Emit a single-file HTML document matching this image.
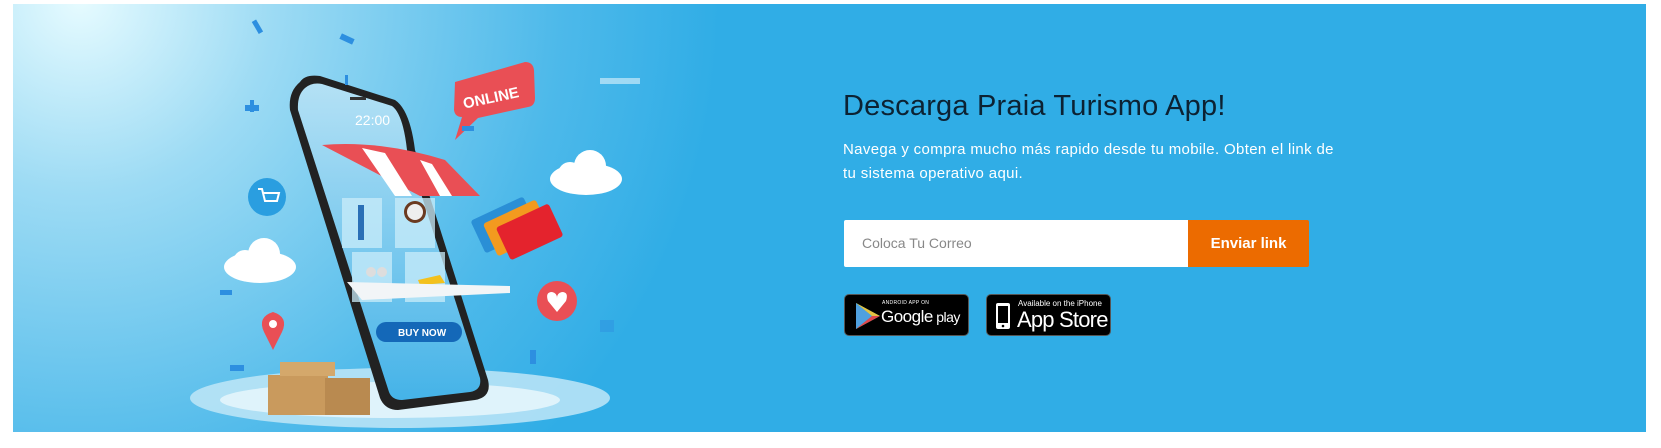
<!DOCTYPE html>
<html><head><meta charset="utf-8"><style>
html,body{margin:0;padding:0;background:#fff;width:1661px;height:448px;overflow:hidden;font-family:"Liberation Sans",sans-serif}
.banner{position:absolute;left:13px;top:4px;width:1633px;height:428px;background:#30ade6;overflow:hidden}
.art{position:absolute;left:-13px;top:-4px}
h2{position:absolute;left:830px;top:86px;margin:0;font-weight:400;font-size:29px;color:#0c2233;letter-spacing:0.2px}
p{position:absolute;left:830px;top:134px;margin:0;width:500px;font-size:15px;line-height:24px;color:#fff;letter-spacing:0.35px}
.inp{position:absolute;left:831px;top:216px;width:345px;height:47px;background:#fff;border-radius:2px 0 0 2px;color:#888;font-size:14px;line-height:47px;padding-left:18px;box-sizing:border-box}
.btn{position:absolute;left:1175px;top:216px;width:121px;height:47px;background:#ec6b00;color:#fff;font-weight:700;font-size:15px;line-height:47px;text-align:center;border-radius:0 2px 2px 0}
.bd{position:absolute;top:290px;height:42px;background:#000;border-radius:5px;color:#fff;border:1px solid #555;box-sizing:border-box}
</style></head><body>
<div class="banner">
<svg class="art" width="820" height="448" viewBox="0 0 820 448">
<defs>
<radialGradient id="g1" cx="80" cy="0" r="640" gradientUnits="userSpaceOnUse"><stop offset="0" stop-color="#e6fbff"/><stop offset="0.3" stop-color="#9ddbf4"/><stop offset="0.75" stop-color="#4db9ea"/><stop offset="1" stop-color="#30ade6"/></radialGradient>
<linearGradient id="sc" x1="0" y1="0" x2="0" y2="1"><stop offset="0" stop-color="#b4e1f5"/><stop offset="1" stop-color="#45b3e8"/></linearGradient>
</defs>
<rect width="820" height="448" fill="url(#g1)"/>
<ellipse cx="400" cy="398" rx="210" ry="30" fill="#bfe6f7" opacity="0.85"/>
<ellipse cx="390" cy="400" rx="170" ry="18" fill="#dff3fb"/>
<path d="M300 82 Q305 74 320 76 L395 100 Q410 110 415 150 L488 380 Q492 397 475 400 L398 410 Q385 410 380 398 L290 110 Q288 92 300 82Z" fill="#222"/>
<path d="M305 88 Q312 82 322 84 L392 106 Q403 114 407 150 L480 378 Q482 390 470 392 L402 400 Q392 400 389 392 L298 110 Q297 95 305 88Z" fill="url(#sc)"/>
<rect x="350" y="97" width="16" height="3" fill="#333"/>
<text x="355" y="125" font-size="14" fill="#fff" font-family="Liberation Sans">22:00</text>
<path d="M322 145 Q380 140 445 160 L480 196 L420 196 Z" fill="#e94f55"/>
<path d="M362 148 L395 196 L412 196 L385 153Z M420 160 L440 196 L452 196 L432 164Z" fill="#fff"/>
<rect x="342" y="198" width="40" height="50" fill="#c9ecfa" opacity="0.75"/>
<rect x="395" y="198" width="40" height="50" fill="#c9ecfa" opacity="0.75"/>
<rect x="352" y="252" width="40" height="50" fill="#c9ecfa" opacity="0.75"/>
<rect x="405" y="252" width="40" height="50" fill="#c9ecfa" opacity="0.75"/>
<rect x="358" y="205" width="6" height="35" fill="#2a6fb6"/>
<circle cx="415" cy="212" r="11" fill="#6b3a20"/><circle cx="415" cy="212" r="8" fill="#eee"/>
<circle cx="371" cy="272" r="5" fill="#ddd"/><circle cx="382" cy="272" r="5" fill="#ddd"/>
<path d="M418 280 L440 275 L445 283 L420 285Z" fill="#f3c11d"/>
<path d="M347 282 L510 286 L510 293 L362 300Z" fill="#f2f5f7"/>
<rect x="376" y="322" width="86" height="20" rx="10" fill="#1468b8"/>
<text x="398" y="336" font-size="10" fill="#fff" font-weight="700" font-family="Liberation Sans">BUY NOW</text>
<path d="M455 82 L525 62 Q533 62 534 70 L535 98 Q535 106 528 107 L478 118 L455 140 L462 117 Q455 117 454 110Z" fill="#e94f55"/>
<text x="462" y="103" font-size="15" fill="#fff" font-weight="700" transform="rotate(-12 490 95)" font-family="Liberation Sans">ONLINE</text>
<g transform="rotate(-25 510 230)"><rect x="478" y="205" width="58" height="36" rx="3" fill="#2a8fd6"/><rect x="488" y="213" width="58" height="36" rx="3" fill="#f39a1f"/><rect x="498" y="222" width="58" height="36" rx="3" fill="#e4232d"/></g>
<circle cx="267" cy="197" r="19" fill="#2a9ee0"/>
<path d="M258 189 L262 189 L265 201 L277 201 L279 193 L263 193" stroke="#fff" stroke-width="2" fill="none"/>
<circle cx="557" cy="301" r="20" fill="#e94f55"/><path d="M557 312 L548 301 Q545 292 552 292 Q557 293 557 298 Q557 293 562 292 Q569 292 566 301Z" fill="#fff"/>
<path d="M264 332 Q257 317 273 312 Q289 317 282 332 L273 350Z" fill="#e94f55"/><circle cx="273" cy="324" r="4" fill="#fff"/>
<ellipse cx="586" cy="179" rx="36" ry="16" fill="#fff"/><circle cx="590" cy="166" r="16" fill="#fff"/><circle cx="570" cy="174" r="12" fill="#fff"/>
<ellipse cx="260" cy="267" rx="36" ry="16" fill="#fff"/><circle cx="264" cy="254" r="16" fill="#fff"/><circle cx="245" cy="262" r="12" fill="#fff"/>
<rect x="268" y="375" width="60" height="40" fill="#c99a5d"/><rect x="325" y="378" width="45" height="37" fill="#b98a50"/><rect x="280" y="362" width="55" height="14" fill="#d4a86b"/>
<g fill="#2d8fe0"><rect x="255" y="20" width="5" height="14" transform="rotate(-30 257 27)"/><rect x="340" y="36" width="14" height="6" transform="rotate(25 347 39)"/><rect x="245" y="105" width="14" height="6"/><rect x="220" y="290" width="12" height="5"/><rect x="230" y="365" width="14" height="6"/><rect x="250" y="100" width="4" height="12"/><rect x="462" y="126" width="12" height="5"/><rect x="530" y="350" width="6" height="14"/><rect x="600" y="320" width="14" height="12" opacity="0.5"/><rect x="345" y="75" width="3" height="10"/></g>
<rect x="600" y="78" width="40" height="6" fill="#fff" opacity="0.5"/>
</svg>
<h2>Descarga Praia Turismo App!</h2>
<p>Navega y compra mucho más rapido desde tu mobile. Obten el link de tu sistema operativo aqui.</p>
<div class="inp">Coloca Tu Correo</div>
<div class="btn">Enviar link</div>
<div class="bd" style="left:831px;width:125px">
<svg width="30" height="30" style="position:absolute;left:8px;top:6px" viewBox="0 0 30 30"><path d="M3 2 L27 15 L3 28Z" fill="#3fb27f"/><path d="M3 2 L19 15 L3 28Z" fill="#4fa0e0"/><path d="M19 15 L27 15 L3 28Z" fill="#e1464d"/><path d="M19 15 L27 15 L3 2Z" fill="#f7c33c" opacity="0.9"/></svg>
<div style="position:absolute;left:37px;top:5px;font-size:5px;letter-spacing:.3px">ANDROID APP ON</div>
<div style="position:absolute;left:36px;top:12px;font-size:17px;letter-spacing:-0.5px">Google<span style="font-size:14px"> play</span></div>
</div>
<div class="bd" style="left:973px;width:125px">
<svg width="16" height="28" style="position:absolute;left:8px;top:7px" viewBox="0 0 16 28"><rect x="1" y="1" width="14" height="26" rx="2" fill="#fff"/><rect x="3" y="4" width="10" height="17" fill="#000"/><circle cx="8" cy="24" r="1.3" fill="#000"/></svg>
<div style="position:absolute;left:31px;top:4px;font-size:8px">Available on the iPhone</div>
<div style="position:absolute;left:30px;top:12px;font-size:22px;letter-spacing:-0.8px">App Store</div>
</div>
</div>
</body></html>
